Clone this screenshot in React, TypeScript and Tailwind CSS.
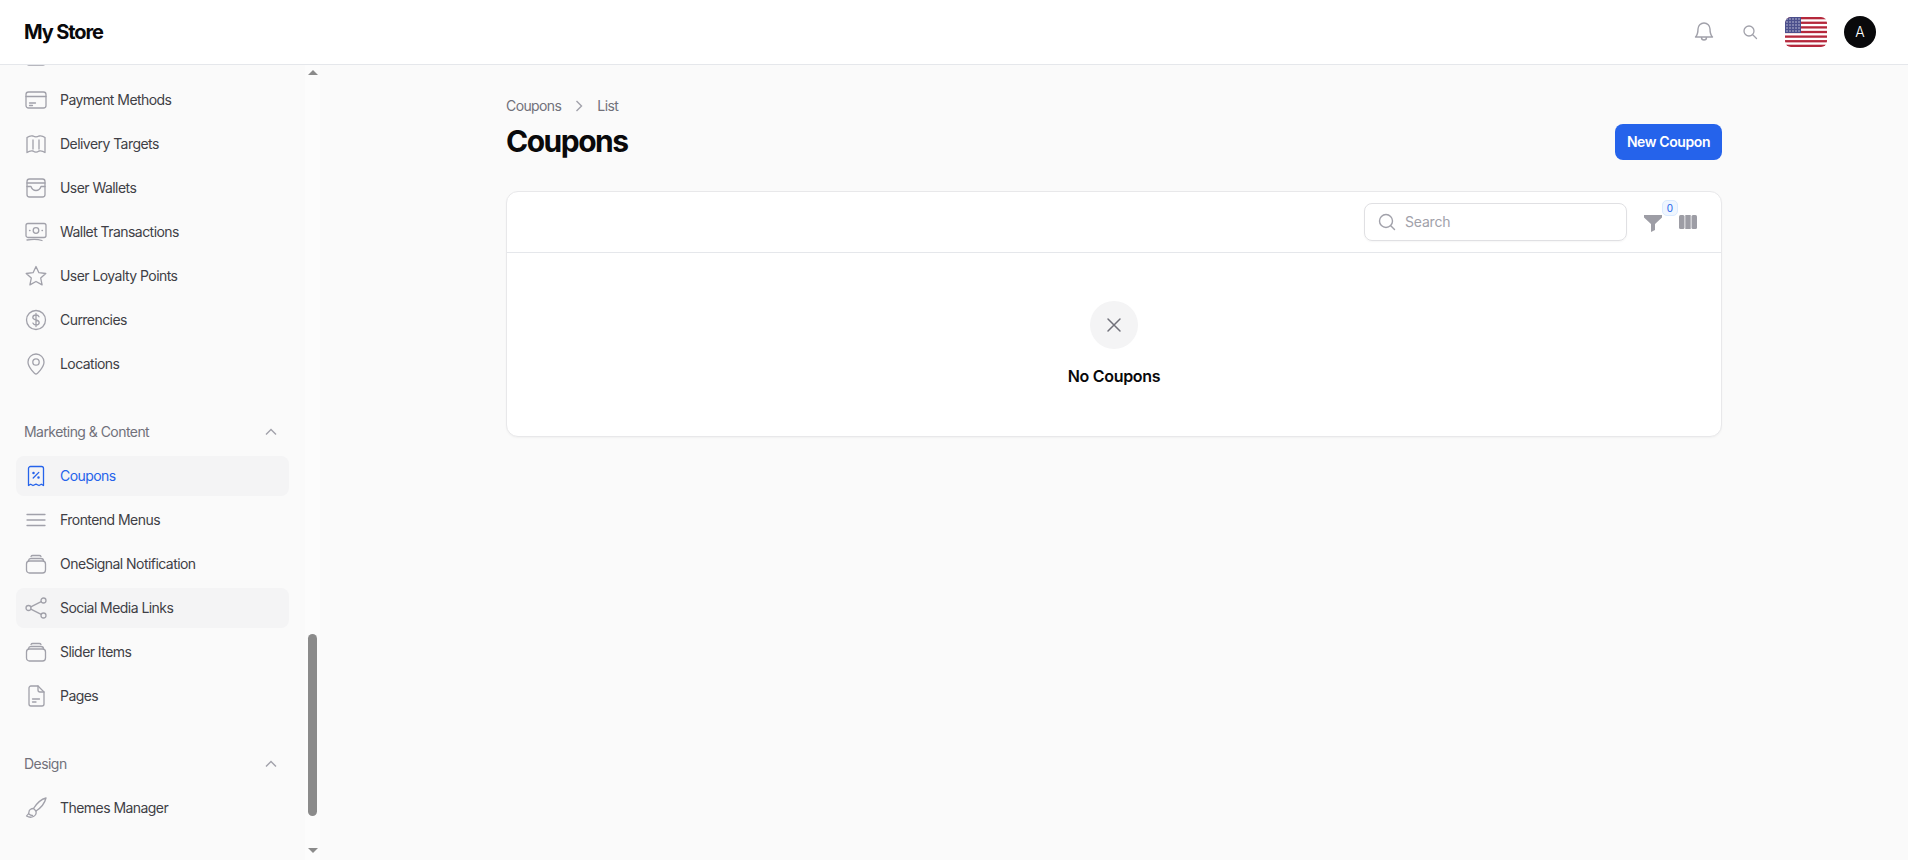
import React from "react";

const Ic = ({ children, cls = "text-[#a1a1aa]" }: { children: React.ReactNode; cls?: string }) => (
  <svg viewBox="0 0 24 24" fill="none" stroke="currentColor" strokeWidth="1.3" strokeLinecap="round" strokeLinejoin="round" className={`w-6 h-6 shrink-0 ${cls}`}>
    {children}
  </svg>
);

const icons: Record<string, React.ReactNode> = {
  top: <rect x="3" y="6" width="18" height="15" rx="2" />,
  card: (<><rect x="2" y="4" width="20" height="16" rx="2.5" /><path d="M2 8.5h20M5.5 15h6M5.5 17.5h3" /></>),
  map: (<><path d="M3 5.5c2-1.5 4-2 6-1.5 2 1.2 4 1.2 6 0 2-.5 4 0 6 1.5v15c-2-1.5-4-2-6-1.5-2 1.5-4 1.5-6 0-2-.5-4 0-6 1.5z" /><path d="M9 8v9M15 8v9" /></>),
  wallet: (<><rect x="3" y="3" width="18" height="18" rx="2.5" /><path d="M3 7h18M3 10.5h4c1 3 3 4 5 4s4-1 5-4h4" /></>),
  money: (<><rect x="2" y="3.5" width="20" height="14" rx="2" /><circle cx="12" cy="10.5" r="2.8" /><path d="M5.5 10.5h.5M18 10.5h.5M3 20c5-.8 11-.8 15 .5" /></>),
  star: <path d="M12 2.5l2.9 6.2 6.9.8-5.1 4.6 1.4 6.8L12 17.5l-6.1 3.4 1.4-6.8L2.2 9.5l6.9-.8z" />,
  dollar: (<><circle cx="12" cy="12" r="9.5" /><path d="M15 8.8c-.5-1.2-1.7-1.8-3-1.8-1.8 0-3.2 1-3.2 2.5 0 3.3 6.4 1.7 6.4 5 0 1.5-1.4 2.5-3.2 2.5-1.4 0-2.6-.7-3.1-1.9M12 5.5v13" /></>),
  pin: (<><path d="M12 22c-1 0-8-6.5-8-12a8 8 0 0 1 16 0c0 5.5-7 12-8 12z" /><circle cx="12" cy="10" r="3.2" /></>),
  receipt: (<><path d="M4.5 21.5V4.5a2 2 0 0 1 2-2h11a2 2 0 0 1 2 2v17l-2.2-1.3-2.3 1.3-3-1.3-3 1.3-2.3-1.3z" /><path d="M9.2 14l5.6-5.6" /><circle cx="9.5" cy="9" r=".6" fill="currentColor" /><circle cx="14.5" cy="13.5" r=".6" fill="currentColor" /></>),
  bars: <path d="M3 6.5h18M3 12h18M3 17.5h18" />,
  stack: (<><rect x="2.5" y="9" width="19" height="12" rx="3" /><path d="M4.5 9v-.5A2.5 2.5 0 0 1 7 6.5h10a2.5 2.5 0 0 1 2.5 2.5" /><path d="M7 4.5c.3-.7 1-1 1.7-1h6.6c.7 0 1.4.3 1.7 1" /></>),
  share: (<><circle cx="19.5" cy="4.5" r="2.5" /><circle cx="4.5" cy="12" r="2.5" /><circle cx="19.5" cy="19.5" r="2.5" /><path d="M6.8 10.800l10.400-5.200M6.800 13.200l10.400 5.200" /></>),
  doc: (<><path d="M5 4a2 2 0 0 1 2-2h7l6 6v12a2 2 0 0 1-2 2H7a2 2 0 0 1-2-2z" /><path d="M14 2v4a2 2 0 0 0 2 2h4M8.5 15h7M8.5 18h3.5" /></>),
  brush: (<><path d="M22 2c-4 1-9 5-12.5 10.5l2.5 2.5C17.5 11.5 21 6 22 2z" /><path d="M9.5 12.5c-2.500 0-4.500 1.500-4.500 3.500 0 2-1 3-2.500 4 2.500 1.500 5 1.500 7 .5 2-1 3-3 2.500-5.500" /><path d="M5 18c1 1 2 1.500 3.500 1.500" /></>),
};

const Item = ({ icon, label, active, hover }: { icon: string; label: string; active?: boolean; hover?: boolean }) => (
  <div className={`h-10 flex items-center gap-3 px-2 rounded-lg ${active || hover ? "bg-[#f4f4f5]" : ""}`}>
    <Ic cls={active ? "text-[#2563eb]" : "text-[#a1a1aa]"}>{icons[icon]}</Ic>
    <span className={`text-sm font-normal tracking-[-0.55px] ${active ? "text-[#2563eb]" : "text-[#3f3f46]"}`}>{label}</span>
  </div>
);

const Group = ({ label, children }: { label: string; children: React.ReactNode }) => (
  <div className="flex flex-col">
    <div className="h-10 flex items-center justify-between pl-2 pr-2 mb-1">
      <span className="text-sm tracking-[-0.55px] text-[#71717a]">{label}</span>
      <svg viewBox="0 0 20 20" fill="none" stroke="#a1a1aa" strokeWidth="1.4" className="w-5 h-5"><path d="M5 12.5l5-5 5 5" /></svg>
    </div>
    <div className="flex flex-col gap-1">{children}</div>
  </div>
);

const Flag = () => (
  <svg viewBox="0 0 42 30" className="w-[42px] h-[30px] rounded-[6px]">
    <rect width="42" height="30" fill="#fff" />
    {[0, 2, 4, 6, 8, 10, 12].map((i) => (
      <rect key={i} y={i * (30 / 13)} width="42" height={30 / 13} fill="#b5283c" />
    ))}
    <rect width="16" height="16" fill="#4b4f8c" />
    {[2, 5, 8, 11, 14].map((y) =>
      [2, 5, 8, 11, 14].map((x) => <circle key={`${x}-${y}`} cx={x} cy={y} r="0.7" fill="#dcdcec" />)
    )}
  </svg>
);

export default function App() {
  return (
    <div className="h-[860px] w-full overflow-hidden flex flex-col bg-[#fafafa] font-['Inter',sans-serif]">
      <header className="h-[65px] shrink-0 bg-white border-b border-[#e5e7eb] flex items-center pl-6 pr-8">
        <div className="text-xl font-bold tracking-[-1.1px] text-[#09090b]">My Store</div>
        <div className="ml-auto flex items-center">
          <svg viewBox="0 0 24 24" fill="none" stroke="#a1a1aa" strokeWidth="1.4" strokeLinecap="round" strokeLinejoin="round" className="w-6 h-6">
            <path d="M12 3a6 6 0 0 0-6 6c0 5-1.5 7-2.5 8h17c-1-1-2.5-3-2.5-8a6 6 0 0 0-6-6zM9.5 17.5a2.5 2.5 0 0 0 5 0" />
          </svg>
          <svg viewBox="0 0 20 20" fill="none" stroke="#a1a1aa" strokeWidth="1.3" strokeLinecap="round" className="w-5 h-5 ml-[24px]">
            <circle cx="9" cy="9" r="5" /><path d="M13 13l3.5 3.5" />
          </svg>
          <div className="ml-[25px]"><Flag /></div>
          <div className="ml-[17px] w-8 h-8 rounded-full bg-[#09090b] text-white text-sm font-light flex items-center justify-center">A</div>
        </div>
      </header>
      <div className="flex flex-1 min-h-0">
        <aside className="w-[320px] shrink-0 flex">
          <nav className="w-[305px] overflow-hidden pl-4 pr-4">
            <div className="flex flex-col gap-1 -mt-[29px]">
              <Item icon="top" label="" />
              <Item icon="card" label="Payment Methods" />
              <Item icon="map" label="Delivery Targets" />
              <Item icon="wallet" label="User Wallets" />
              <Item icon="money" label="Wallet Transactions" />
              <Item icon="star" label="User Loyalty Points" />
              <Item icon="dollar" label="Currencies" />
              <Item icon="pin" label="Locations" />
            </div>
            <div className="mt-[28px]">
              <Group label="Marketing & Content">
                <Item icon="receipt" label="Coupons" active />
                <Item icon="bars" label="Frontend Menus" />
                <Item icon="stack" label="OneSignal Notification" />
                <Item icon="share" label="Social Media Links" hover />
                <Item icon="stack" label="Slider Items" />
                <Item icon="doc" label="Pages" />
              </Group>
            </div>
            <div className="mt-[28px]">
              <Group label="Design">
                <Item icon="brush" label="Themes Manager" />
              </Group>
            </div>
          </nav>
          <div className="w-[15px] flex flex-col items-center bg-[#fcfcfc] pb-[2px]">
            <div className="h-[15px] flex items-center justify-center"><div className="w-0 h-0 border-x-[5px] border-x-transparent border-b-[5px] border-b-[#8b8b8b]" /></div>
            <div className="h-[554px] shrink-0" />
            <div className="w-[9px] h-[182px] shrink-0 rounded-[5px] bg-[#8b8b8b]" />
            <div className="flex-1" />
            <div className="h-[15px] flex items-center justify-center"><div className="w-0 h-0 border-x-[5px] border-x-transparent border-t-[5px] border-t-[#8b8b8b]" /></div>
          </div>
        </aside>
        <main className="flex-1 min-w-0">
          <div className="max-w-7xl mx-auto px-8 pt-8">
            <div className="flex items-end justify-between">
              <div>
                <div className="flex items-center text-sm tracking-[-0.6px] text-[#71717a] h-5 -mt-px">
                  <span>Coupons</span>
                  <svg viewBox="0 0 20 20" fill="none" stroke="#a1a1aa" strokeWidth="1.4" className="w-5 h-5 mx-[8px]"><path d="M7.5 5l5 5-5 5" /></svg>
                  <span>List</span>
                </div>
                <h1 className="text-3xl font-bold tracking-[-1.5px] text-[#09090b] mt-[7px] leading-9">Coupons</h1>
              </div>
              <button className="h-9 w-[107px] rounded-lg bg-[#2563eb] text-white text-sm font-semibold tracking-[-0.4px] relative top-px">New Coupon</button>
            </div>
            <section className="mt-8 bg-white rounded-xl border border-[#e8e8ea] shadow-[0_1px_2px_rgba(0,0,0,0.04)]">
              <div className="h-[61px] border-b border-[#e5e7eb] flex items-center justify-end pr-[23px]">
                <div className="w-[263px] h-[38px] rounded-lg border border-[#e0e0e3] shadow-[0_1px_2px_rgba(0,0,0,0.04)] flex items-center px-3 gap-2">
                  <svg viewBox="0 0 20 20" fill="none" stroke="#a1a1aa" strokeWidth="1.4" strokeLinecap="round" className="w-5 h-5">
                    <circle cx="9" cy="9" r="6.5" /><path d="M14 14l3.5 3.5" />
                  </svg>
                  <span className="text-sm tracking-[-0.2px] text-[#a1a1aa]">Search</span>
                </div>
                <div className="relative ml-[16px]">
                  <svg viewBox="0 0 20 20" fill="#9d9da5" className="w-[20px] h-5"><path d="M1 3h18v2.5L12 12v6l-4 2v-8L1 5.5z" /></svg>
                  <span className="absolute -top-[12px] left-[19px] w-[16px] h-[16px] rounded-[5px] bg-[#eff6ff] border border-[#dbeafe] text-[#2563eb] text-[10px] flex items-center justify-center">0</span>
                </div>
                <svg viewBox="0 0 20 20" fill="#9d9da5" className="w-5 h-5 ml-[15px]"><rect x="1" y="3" width="5.5" height="14" rx="1.5" /><rect x="7.3" y="3" width="5.4" height="14" /><rect x="13.5" y="3" width="5.5" height="14" rx="1.5" /></svg>
              </div>
              <div className="flex flex-col items-center pt-[48px] pb-[48px]">
                <div className="w-12 h-12 rounded-full bg-[#f4f4f5] flex items-center justify-center">
                  <svg viewBox="0 0 24 24" fill="none" stroke="#71717a" strokeWidth="1.5" strokeLinecap="round" className="w-6 h-6"><path d="M6 6l12 12M18 6L6 18" /></svg>
                </div>
                <div className="mt-[15px] text-base font-semibold tracking-[-0.3px] text-[#09090b] leading-6">No Coupons</div>
              </div>
            </section>
          </div>
        </main>
      </div>
    </div>
  );
}
